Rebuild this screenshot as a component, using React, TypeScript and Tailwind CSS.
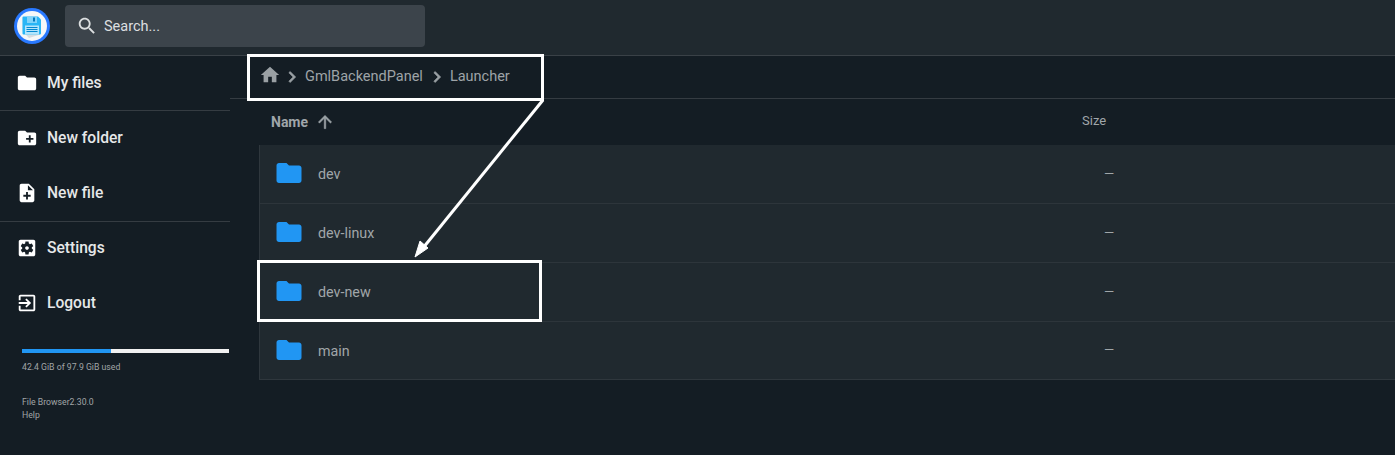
import React from 'react';

const Icon = ({ d, size = 24, className = '' }: { d: string; size?: number; className?: string }) => (
  <svg width={size} height={size} viewBox="0 0 24 24" fill="currentColor" className={`shrink-0 ${className}`}>
    <path d={d} />
  </svg>
);

const icons = {
  folder: 'M10 4H4c-1.1 0-1.99.9-1.99 2L2 18c0 1.1.9 2 2 2h16c1.1 0 2-.9 2-2V8c0-1.1-.9-2-2-2h-8l-2-2z',
  newFolder: 'M20 6h-8l-2-2H4c-1.11 0-1.99.89-1.99 2L2 18c0 1.11.89 2 2 2h16c1.11 0 2-.89 2-2V8c0-1.11-.89-2-2-2zm-1 8h-3v3h-2v-3h-3v-2h3V9h2v3h3v2z',
  newFile: 'M14 2H6c-1.1 0-1.99.9-1.99 2L4 20c0 1.1.89 2 1.99 2H18c1.1 0 2-.9 2-2V8l-6-6zm2 14h-3v3h-2v-3H8v-2h3v-3h2v3h3v2zm-3-7V3.5L18.5 9H13z',
  settings: 'M12 10c-1.1 0-2 .9-2 2s.9 2 2 2 2-.9 2-2-.9-2-2-2zm7-7H5c-1.11 0-2 .9-2 2v14c0 1.1.89 2 2 2h14c1.11 0 2-.9 2-2V5c0-1.1-.89-2-2-2zm-1.75 9c0 .23-.02.46-.05.68l1.48 1.16c.13.11.17.3.08.45l-1.4 2.42c-.09.15-.27.21-.43.15l-1.74-.7c-.36.28-.76.51-1.18.69l-.26 1.85c-.03.17-.18.3-.35.3h-2.8c-.17 0-.32-.13-.35-.29l-.26-1.85c-.43-.18-.82-.41-1.18-.69l-1.74.7c-.16.06-.34 0-.43-.15l-1.4-2.42c-.09-.15-.05-.34.08-.45l1.48-1.16c-.03-.23-.05-.46-.05-.69 0-.23.02-.46.05-.68l-1.48-1.16c-.13-.11-.17-.3-.08-.45l1.4-2.42c.09-.15.27-.21.43-.15l1.74.7c.36-.28.76-.51 1.18-.69l.26-1.85c.03-.17.18-.3.35-.3h2.8c.17 0 .32.13.35.29l.26 1.85c.43.18.82.41 1.18.69l1.74-.7c.16-.06.34 0 .43.15l1.4 2.42c.09.15.05.34-.08.45l-1.48 1.16c.03.23.05.46.05.69z',
  logout: 'M10.09 15.59L11.5 17l5-5-5-5-1.41 1.41L12.67 11H3v2h9.67l-2.58 2.59zM19 3H5c-1.11 0-2 .9-2 2v4h2V5h14v14H5v-4H3v4c0 1.1.89 2 2 2h14c1.1 0 2-.9 2-2V5c0-1.1-.9-2-2-2z',
  home: 'M10 20v-6h4v6h5v-8h3L12 3 2 12h3v8z',
  chevron: 'M10 6L8.59 7.41 13.17 12l-4.58 4.59L10 18l6-6z',
  search: 'M15.5 14h-.79l-.28-.27C15.41 12.59 16 11.11 16 9.5 16 5.91 13.09 3 9.5 3S3 5.91 3 9.5 5.91 16 9.5 16c1.61 0 3.09-.59 4.23-1.57l.27.28v.79l5 4.99L20.49 19l-4.99-5zm-6 0C7.01 14 5 11.99 5 9.5S7.01 5 9.5 5 14 7.01 14 9.5 11.99 14 9.5 14z',
  up: 'M4 12l1.41 1.41L11 7.83V20h2V7.83l5.58 5.59L20 12l-8-8-8 8z',
};

const Logo = () => (
  <svg width="38" height="38" viewBox="0 0 38 38">
    <circle cx="19" cy="19" r="18" fill="#2979ff" />
    <circle cx="19" cy="19" r="15" fill="#f5f7f8" />
    <path d="M27 27.5L16 31 9.5 24V11h15z" fill="#d5dde1" />
    <path d="M10.5 9.5h14.5l3 3v14a1 1 0 0 1-1 1H10.5a1 1 0 0 1-1-1v-16a1 1 0 0 1 1-1z" fill="#29b6f6" />
    <rect x="14" y="9.5" width="10" height="6.5" fill="#81d4fa" />
    <rect x="20" y="10.5" width="2" height="4" fill="#0277bd" />
    <rect x="12" y="18.5" width="14" height="9" fill="#b3e5fc" />
    <path d="M13.5 20.5h11M13.5 22.5h11M13.5 24.5h11" stroke="#0288d1" strokeWidth="1" />
  </svg>
);

const SideItem = ({ icon, label, className = '' }: { icon: string; label: string; className?: string }) => (
  <div className={`flex h-[55px] items-center pl-4 text-[15.6px] font-medium text-[#e6e8e9] ${className}`}>
    <Icon d={icon} size={22} className="text-white" />
    <span className="ml-[9px] mt-[2px]">{label}</span>
  </div>
);

const rows = ['dev', 'dev-linux', 'dev-new', 'main'];

export default function App() {
  return (
    <div className="relative h-[455px] w-[1395px] overflow-hidden bg-[#141d24] font-['Roboto',sans-serif]">
      {/* Top bar */}
      <header className="flex h-[56px] border-b border-[#3a4147] bg-[#20292f]">
        <div className="ml-[13px] mr-[14px] mt-[7px] flex h-[38px] w-[38px] items-center justify-center">
          <Logo />
        </div>
        <div className="mt-[5px] flex h-[42px] w-[360px] items-center rounded-[4px] bg-[#3c444b] pl-[11px] text-[#dcdfe0]">
          <Icon d={icons.search} size={22} />
          <span className="ml-[6px] mt-[2px] text-[14.5px]">Search...</span>
        </div>
      </header>

      <div className="flex">
        {/* Sidebar */}
        <aside className="-mt-px w-[230px] shrink-0">
          <SideItem icon={icons.folder} label="My files" />
          <div className="border-t border-[#353c42]">
            <SideItem icon={icons.newFolder} label="New folder" className="-mt-px" />
            <SideItem icon={icons.newFile} label="New file" />
          </div>
          <div className="mt-px border-t border-[#353c42]">
            <SideItem icon={icons.settings} label="Settings" className="-mt-[2px]" />
            <SideItem icon={icons.logout} label="Logout" />
          </div>
          <div className="pl-[22px] pt-[19px] text-[8.7px] leading-[13px] text-[#a1a5a7]">
            <div className="flex h-[4px] w-[207px] bg-[#f1f1f1]">
              <div className="h-full w-[89px] bg-[#2196f3]" />
            </div>
            <p className="mt-[8px]">42.4 GiB of 97.9 GiB used</p>
            <p className="mt-[22px]">File Browser2.30.0</p>
            <p>Help</p>
          </div>
        </aside>

        {/* Listing */}
        <main className="min-w-0 flex-1">
          <div className="flex h-[43px] items-center border-b border-[#353c42] pb-[1px] pl-[29px] text-[14.5px] text-[#9ea4a8]">
            <Icon d={icons.home} size={22} className="-mt-[3px] text-[#9aa0a4]" />
            <Icon d={icons.chevron} size={22} className="stroke-current stroke-[0.7] text-[#9aa0a4]" />
            <span className="ml-[2px]">GmlBackendPanel</span>
            <Icon d={icons.chevron} size={22} className="ml-[3px] stroke-current stroke-[0.7] text-[#9aa0a4]" />
            <span className="ml-[2px]">Launcher</span>
          </div>
          <div className="ml-[29px]">
            <div className="flex h-[46px] items-center pb-[2px] text-[#a0a6aa]">
              <div className="mt-[2px] flex w-[823px] items-center pl-[12px]">
                <span className="text-[14px] font-bold">Name</span>
                <Icon d={icons.up} size={20} className="ml-[7px] stroke-current stroke-[0.5] text-[#9aa0a4]" />
              </div>
              <span className="text-[13px]">Size</span>
            </div>
            <div className="border-b border-l border-[#2f373d]">
              {rows.map((name) => (
                <div
                  key={name}
                  className="flex h-[59px] items-center border-b border-[#2d353b] bg-[#20292f] last:h-[57px] last:border-b-0"
                >
                  <Icon d={icons.folder} size={30} className="-mt-[2px] ml-[14px] text-[#2196f3]" />
                  <span className="ml-[14px] mt-[2px] w-[786px] text-[14.3px] text-[#a0a6a9]">{name}</span>
                  <span className="-mt-px text-[13px] text-[#a0a6a9]">—</span>
                </div>
              ))}
            </div>
          </div>
        </main>
      </div>

      {/* Annotation overlays */}
      <div className="absolute left-[247px] top-[54px] h-[47px] w-[297px] border-[3px] border-white" />
      <div className="absolute left-[257px] top-[260px] h-[62px] w-[285px] border-[3px] border-white" />
      <svg className="absolute left-0 top-0" width="1395" height="455" viewBox="0 0 1395 455" fill="none">
        <path d="M543 100L423 248" stroke="white" strokeWidth="3" />
        <path d="M415 257L420 241 428 248z" fill="white" stroke="white" strokeWidth="1" />
      </svg>
    </div>
  );
}
